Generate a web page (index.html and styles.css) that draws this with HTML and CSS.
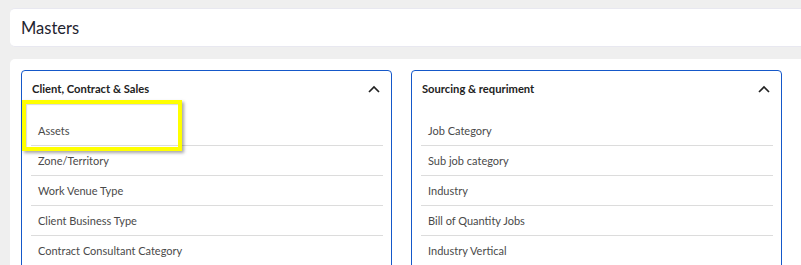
FILE: index.html
```html
<!DOCTYPE html>
<html>
<head>
<meta charset="utf-8">
<link rel="stylesheet" href="styles.css">
</head>
<body>
<div class="page">
  <div class="page-header">Masters</div>
  <div class="panel">
    <div class="card">
      <div class="card-head">
        <span class="card-title">Client, Contract &amp; Sales</span>
        <svg class="chev" width="12" height="8" viewBox="0 0 12 8"><path d="M1 7 L6 2 L11 7" fill="none" stroke="#222" stroke-width="1.7"/></svg>
      </div>
      <ul class="items">
        <li>Assets</li>
        <li>Zone/Territory</li>
        <li>Work Venue Type</li>
        <li>Client Business Type</li>
        <li>Contract Consultant Category</li>
      </ul>
      <div class="highlight"></div>
    </div>
    <div class="card">
      <div class="card-head">
        <span class="card-title">Sourcing &amp; requriment</span>
        <svg class="chev" width="12" height="8" viewBox="0 0 12 8"><path d="M1 7 L6 2 L11 7" fill="none" stroke="#222" stroke-width="1.7"/></svg>
      </div>
      <ul class="items">
        <li>Job Category</li>
        <li>Sub job category</li>
        <li>Industry</li>
        <li>Bill of Quantity Jobs</li>
        <li>Industry Vertical</li>
      </ul>
    </div>
    <div class="card"></div>
  </div>
</div>
</body>
</html>
```

FILE: styles.css
```css
html, body {
  margin: 0;
  padding: 0;
  background: #efefef;
  overflow: hidden;
  height: 265px;
}
body {
  font-family: Lato, "Open Sans", sans-serif;
}
.page {
  padding: 8px 0 0 10px;
  width: 1300px;
}
.page-header {
  background: #fff;
  border-radius: 5px;
  border-top: 1px solid #e8e8f0;
  border-bottom: 1px solid #e8e8f0;
  height: 37px;
  line-height: 38px;
  padding-left: 11px;
  font-size: 16.5px;
  color: #1f2430;
}
.panel {
  margin-top: 12px;
  background: #fff;
  border-radius: 5px;
  padding: 11px;
  display: flex;
  gap: 19px;
  height: 400px;
}
.card {
  position: relative;
  width: 369px;
  flex: none;
  border: 1px solid #1558c9;
  border-radius: 4px;
  height: 300px;
}
.card-head {
  display: flex;
  justify-content: space-between;
  align-items: flex-start;
  padding: 10px 11px 19px 10px;
  height: 16px;
}
.card-title {
  font-size: 11.2px;
  font-weight: 700;
  line-height: 16px;
  color: #222;
}
.chev {
  margin-top: 4px;
}
.items {
  list-style: none;
  margin: 0 8px 0 9px;
  padding: 0;
}
.items li {
  box-sizing: border-box;
  height: 30px;
  line-height: 29px;
  border-bottom: 1px solid #dcdcdc;
  padding-left: 7px;
  font-size: 11px;
  color: #4a4a4a;
}
.highlight {
  position: absolute;
  left: 0;
  top: 29px;
  width: 152px;
  height: 43px;
  border: 4px solid #ffff00;
  box-shadow: 2px 2px 3px rgba(0, 0, 0, 0.35), inset 1px 1px 1px rgba(0, 0, 0, 0.15);
}
```
